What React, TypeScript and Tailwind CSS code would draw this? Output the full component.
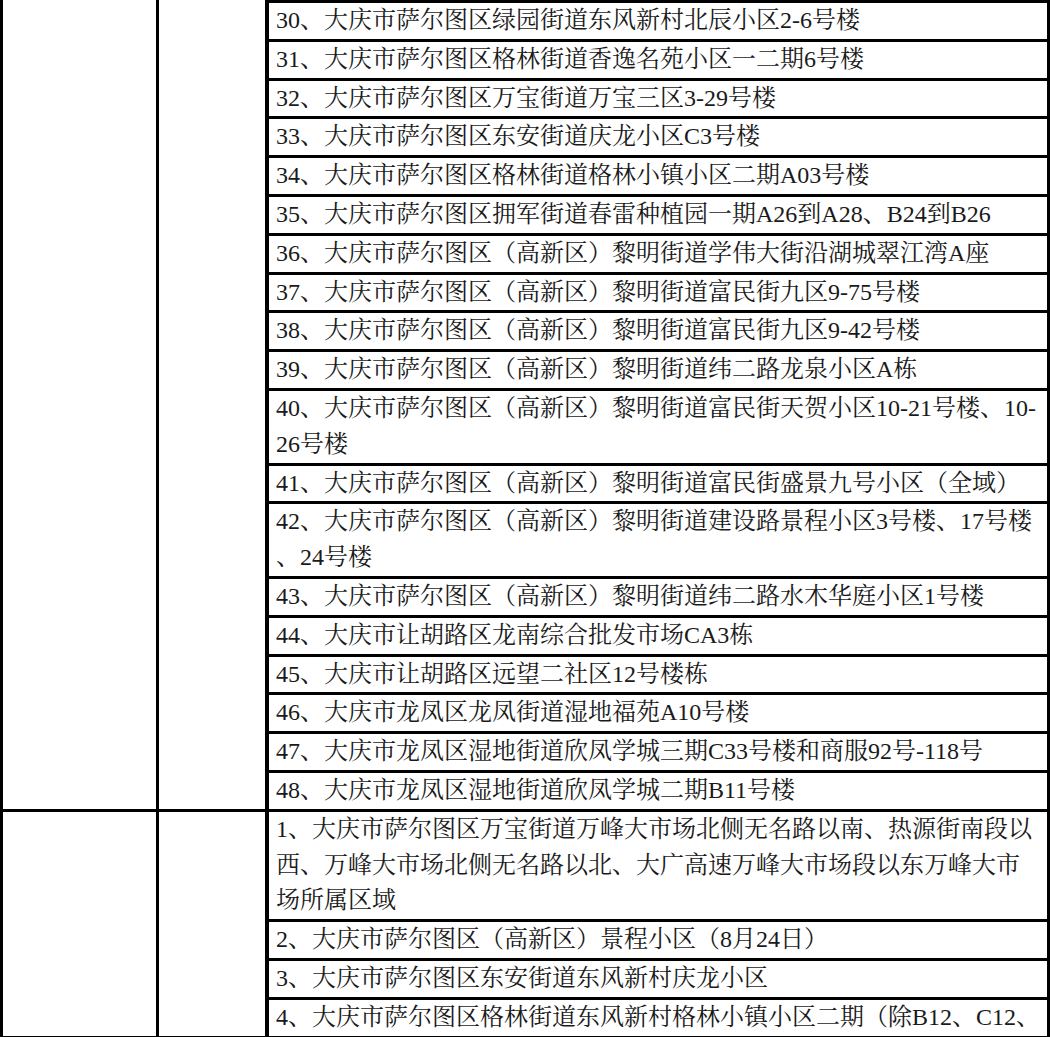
const groupOne: string[][] = [
  ['30、大庆市萨尔图区绿园街道东风新村北辰小区2-6号楼'],
  ['31、大庆市萨尔图区格林街道香逸名苑小区一二期6号楼'],
  ['32、大庆市萨尔图区万宝街道万宝三区3-29号楼'],
  ['33、大庆市萨尔图区东安街道庆龙小区C3号楼'],
  ['34、大庆市萨尔图区格林街道格林小镇小区二期A03号楼'],
  ['35、大庆市萨尔图区拥军街道春雷种植园一期A26到A28、B24到B26'],
  ['36、大庆市萨尔图区（高新区）黎明街道学伟大街沿湖城翠江湾A座'],
  ['37、大庆市萨尔图区（高新区）黎明街道富民街九区9-75号楼'],
  ['38、大庆市萨尔图区（高新区）黎明街道富民街九区9-42号楼'],
  ['39、大庆市萨尔图区（高新区）黎明街道纬二路龙泉小区A栋'],
  ['40、大庆市萨尔图区（高新区）黎明街道富民街天贺小区10-21号楼、10-', '26号楼'],
  ['41、大庆市萨尔图区（高新区）黎明街道富民街盛景九号小区（全域）'],
  ['42、大庆市萨尔图区（高新区）黎明街道建设路景程小区3号楼、17号楼', '、24号楼'],
  ['43、大庆市萨尔图区（高新区）黎明街道纬二路水木华庭小区1号楼'],
  ['44、大庆市让胡路区龙南综合批发市场CA3栋'],
  ['45、大庆市让胡路区远望二社区12号楼栋'],
  ['46、大庆市龙凤区龙凤街道湿地福苑A10号楼'],
  ['47、大庆市龙凤区湿地街道欣凤学城三期C33号楼和商服92号-118号'],
  ['48、大庆市龙凤区湿地街道欣凤学城二期B11号楼'],
]

const groupTwo: string[][] = [
  [
    '1、大庆市萨尔图区万宝街道万峰大市场北侧无名路以南、热源街南段以',
    '西、万峰大市场北侧无名路以北、大广高速万峰大市场段以东万峰大市',
    '场所属区域',
  ],
  ['2、大庆市萨尔图区（高新区）景程小区（8月24日）'],
  ['3、大庆市萨尔图区东安街道东风新村庆龙小区'],
  ['4、大庆市萨尔图区格林街道东风新村格林小镇小区二期（除B12、C12、'],
]

// 左两列为合并单元格，右列逐行列出地址
function Group({ rows, topLine }: { rows: string[][]; topLine?: boolean }) {
  return (
    <div className="flex border-b-[3px] border-black">
      <div className="w-[156px] shrink-0 border-r-[3px] border-black" />
      <div className="w-[110px] shrink-0 border-r-[4px] border-black" />
      <div className={`flex-1 min-w-0 flex flex-col ${topLine ? 'border-t-[3px] border-black' : ''}`}>
        {rows.map((lines, i) => (
          <div
            key={i}
            className={`pl-[7px] leading-[35.8px] whitespace-nowrap overflow-hidden ${
              i < rows.length - 1 ? 'border-b-[3px] border-black' : ''
            }`}
          >
            {lines.map((line, j) => (
              <div key={j}>{line}</div>
            ))}
          </div>
        ))}
      </div>
    </div>
  )
}

export default function App() {
  return (
    <div className="h-[1037px] w-[1053px] overflow-hidden bg-white">
      <div className="w-[1050px] border-l-[3px] border-r-[3px] border-black text-[24px] font-normal text-[#1a1a1a] [font-family:'Liberation_Serif','Noto_Serif_CJK_SC','Noto_Sans_CJK_SC',serif]">
        <Group rows={groupOne} topLine />
        <Group rows={groupTwo} />
      </div>
    </div>
  )
}
